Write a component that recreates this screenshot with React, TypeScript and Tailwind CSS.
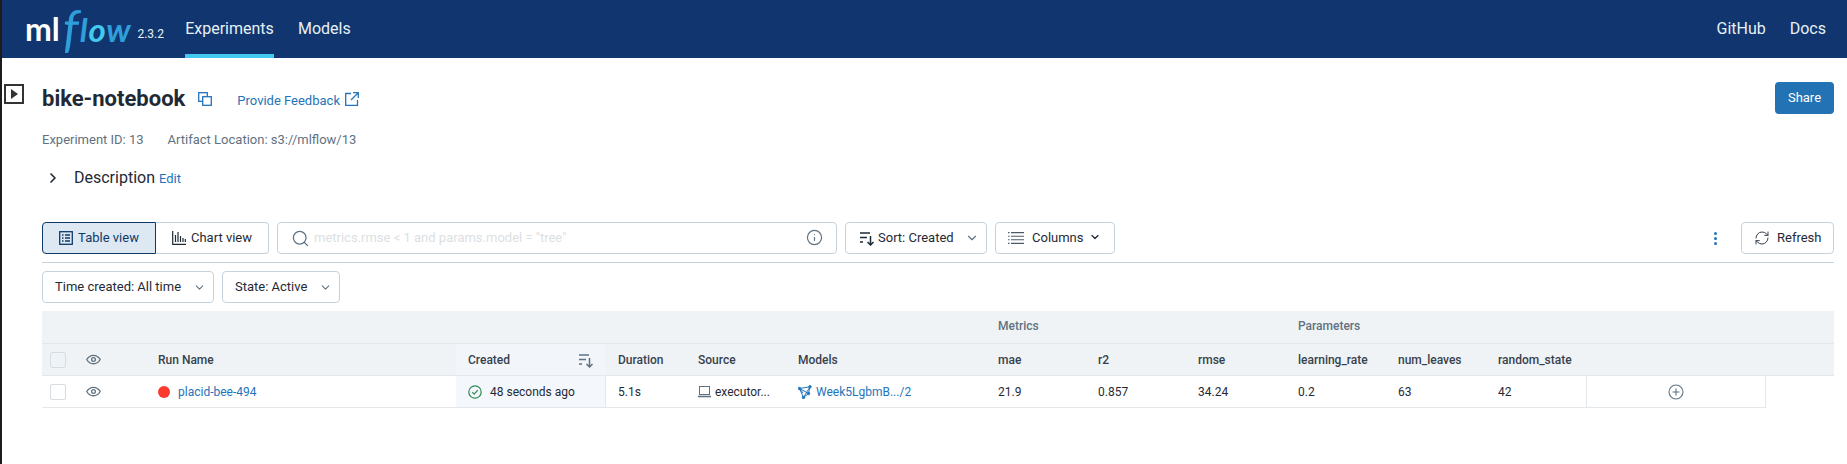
import { ChevronDown, ChevronRight, Info, RefreshCw, Search } from 'lucide-react';

const font = { fontFamily: 'Roboto, sans-serif' };

// small inline icons from the toolbar and the table
function SortIcon({ className }: { className?: string }) {
  return (
    <svg width="16" height="16" viewBox="0 0 16 16" fill="none" stroke="currentColor" strokeWidth="1.5" className={className}>
      <path d="M1 3h10M1 7.500h7M1 12h3" />
      <path d="M11.500 6v9M8.500 12l3 3 3-3" />
    </svg>
  );
}

function EyeIcon() {
  return (
    <svg width="15" height="15" viewBox="0 0 16 16" fill="none" stroke="#5f7281" strokeWidth="1.4">
      <path d="M.8 8C2.600 5 5 3.500 8 3.500S13.400 5 15.200 8C13.400 11 11 12.500 8 12.500S2.600 11 .8 8z" />
      <circle cx="8" cy="8" r="2" />
    </svg>
  );
}

function TableIcon() {
  return (
    <svg width="14" height="14" viewBox="0 0 14 14" fill="none" stroke="#0e3a68" strokeWidth="1.3">
      <rect x=".7" y=".7" width="12.600" height="12.600" />
      <path d="M3 4h1.500M3 7h1.500M3 10h1.500M6 4h5M6 7h5M6 10h5" />
    </svg>
  );
}

function ChartIcon() {
  return (
    <svg width="14" height="14" viewBox="0 0 14 14" fill="none" stroke="#1f2a36" strokeWidth="1.2">
      <path d="M.7 0v13.300H14M3.500 11V4M6 11V1M8.500 11V5M11 11V7M13.300 11V8" />
    </svg>
  );
}

function ColumnsIcon() {
  return (
    <svg width="16" height="12" viewBox="0 0 16 12" fill="none" stroke="#4b5b69" strokeWidth="1.1">
      <path d="M0 .6h1.500M0 4.200h1.500M0 7.800h1.500M0 11.400h1.500M3 .6h13M3 4.200h13M3 7.800h13M3 11.400h13" />
    </svg>
  );
}

function ModelIcon() {
  return (
    <svg width="14" height="14" viewBox="0 0 14 14" fill="none" stroke="#2374bb" strokeWidth="1">
      <path d="M1.500 3.500L12 1.800l-1.500 6.700-5 4zM1.500 3.500l9 5M12 1.800L5.500 12.500M1.500 3.500L5 8" />
      <circle cx="1.500" cy="3.500" r="1.200" fill="#2374bb" />
      <circle cx="12" cy="1.800" r="1.200" fill="#2374bb" />
      <circle cx="10.500" cy="8.500" r="1.200" fill="#2374bb" />
      <circle cx="5.500" cy="12.500" r="1.200" fill="#2374bb" />
    </svg>
  );
}

const toolbarBtn = 'h-[32px] flex items-center border border-[#c4d2de] rounded-[4px] bg-white text-[13px] text-[#1f2a36]';
const logoFont = { fontFamily: 'Lato, sans-serif' };

export default function App() {
  return (
    <div className="flex h-[464px] w-[1847px] overflow-hidden bg-white" style={font}>
      <div className="w-[2px] bg-[#1c1c1c] shrink-0" />
      <div className="flex-1 min-w-0 flex flex-col">
        {/* Top nav */}
        <header className="h-[58px] bg-[#11356f] flex items-stretch justify-between shrink-0">
          <div className="flex items-stretch">
            <div className="w-[183px] flex items-center pl-[23px] relative">
              <span className="text-white text-[32px] font-bold leading-[40px]" style={logoFont}>ml</span>
              <span className="text-[#2f9fdb] text-[50px] italic leading-[50px] -mt-[4px] pl-[3px] pr-[1px]" style={logoFont}>f</span>
              <span className="text-[#2f9fdb] text-[33px] font-bold italic leading-[40px] tracking-[0.8px]" style={logoFont}>
                l<span className="text-[#43c9ed]">o</span>w
              </span>
              <span className="text-[#e6f1f5] text-[12px] ml-[6px] mt-[9px]">2.3.2</span>
            </div>
            <div className="w-[89px] flex items-center justify-center text-[16px] text-[#e6f1f5] border-b-[4px] border-[#43c9ed] pt-[4px]">Experiments</div>
            <div className="ml-[24px] flex items-center text-[16px] text-[#e6f1f5]">Models</div>
          </div>
          <div className="flex items-center gap-[24px] pr-[21px] text-[16px] text-[#e6f1f5]">
            <span>GitHub</span>
            <span>Docs</span>
          </div>
        </header>

        <main className="relative pl-[40px] pr-[13px]">
          {/* Sidebar toggle */}
          <div className="absolute left-[2px] top-[26px] w-[20px] h-[20px] border-[2px] border-[#333333] flex items-center justify-center">
            <span className="w-0 h-0 border-y-[5px] border-y-transparent border-l-[7px] border-l-[#333333]" />
          </div>

          <div className="h-[32px] mt-[24px] flex items-center justify-between">
            <div className="flex items-center">
              <h1 className="text-[22px] font-bold text-[#1f2a36]">bike-notebook</h1>
              <svg width="14" height="14" viewBox="0 0 14 14" fill="none" stroke="#2374bb" strokeWidth="1.300" className="ml-[13px] mt-[2px]">
                <rect x=".7" y=".7" width="8.600" height="8.600" />
                <rect x="4.700" y="4.700" width="8.600" height="8.600" fill="white" />
              </svg>
              <span className="ml-[25px] text-[13px] text-[#2374bb] mt-[5px]">Provide Feedback</span>
              <svg width="14" height="14" viewBox="0 0 14 14" fill="none" stroke="#2374bb" strokeWidth="1.300" className="ml-[5px] mt-[2px]">
                <path d="M6 1.500H.7v11.800h11.800V8M8 .7h5.300V6M13 1L6 8" />
              </svg>
            </div>
            <button className="w-[59px] h-[32px] rounded-[4px] bg-[#2272b4] text-white text-[13px]">Share</button>
          </div>

          <div className="mt-[17px] h-[18px] flex items-center gap-[24px] text-[13px] text-[#5f7281]">
            <span>Experiment ID: 13</span>
            <span>Artifact Location: s3://mlflow/13</span>
          </div>

          <div className="mt-[19px] h-[20px] flex items-center">
            <ChevronRight size={16} strokeWidth={2.500} className="text-[#1f2a36] ml-[3px]" />
            <span className="ml-[13px] text-[16px] text-[#1f2a36]">Description</span>
            <span className="ml-[4px] text-[13px] text-[#2374bb] mt-[1px]">Edit</span>
          </div>

          {/* Toolbar */}
          <div className="mt-[34px] flex items-center pb-[8px] border-b border-[#c4d2de] h-[41px]">
            <div className="flex">
              <div className="w-[114px] h-[32px] flex items-center justify-center gap-[5px] border border-[#0e3a68] rounded-l-[4px] bg-[#dee8f2] text-[13px] text-[#0e3a68]">
                <TableIcon />
                <span>Table view</span>
              </div>
              <div className="w-[113px] h-[32px] flex items-center justify-center gap-[5px] border border-l-0 border-[#c4d2de] rounded-r-[4px] text-[13px] text-[#1f2a36]">
                <ChartIcon />
                <span>Chart view</span>
              </div>
            </div>
            <div className={`${toolbarBtn} w-[560px] ml-[8px] pl-[13px] pr-[13px]`}>
              <Search size={19} strokeWidth={1.600} className="text-[#5f7281]" />
              <span className="ml-[4px] text-[#dcdfe2] flex-1">metrics.rmse &lt; 1 and params.model = "tree"</span>
              <Info size={17} strokeWidth={1.700} className="text-[#5f7281] -mt-[2px]" />
            </div>
            <div className={`${toolbarBtn} w-[142px] ml-[8px] pl-[13px]`}>
              <SortIcon className="text-[#1f2a36]" />
              <span className="ml-[3px]">Sort: Created</span>
              <ChevronDown size={14} className="ml-[11px] text-[#5f7281]" />
            </div>
            <div className={`${toolbarBtn} w-[120px] ml-[8px] pl-[12px]`}>
              <ColumnsIcon />
              <span className="ml-[8px]">Columns</span>
              <ChevronDown size={12} strokeWidth={2.500} className="ml-[5px] text-[#1f2a36] -mt-[3px]" />
            </div>
            <div className="flex-1" />
            <div className="flex flex-col gap-[2px] mr-[24px]">
              <span className="w-[3px] h-[3px] rounded-full bg-[#2374bb]" />
              <span className="w-[3px] h-[3px] rounded-full bg-[#2374bb]" />
              <span className="w-[3px] h-[3px] rounded-full bg-[#2374bb]" />
            </div>
            <div className={`${toolbarBtn} w-[93px] pl-[12px]`}>
              <RefreshCw size={16} strokeWidth={1.500} className="text-[#37424d]" />
              <span className="ml-[7px]">Refresh</span>
            </div>
          </div>

          {/* Filters */}
          <div className="mt-[8px] flex gap-[8px]">
            <div className={`${toolbarBtn} w-[172px] pl-[12px]`}>
              <span>Time created: All time</span>
              <ChevronDown size={13} className="ml-[12px] text-[#5f7281]" />
            </div>
            <div className={`${toolbarBtn} w-[118px] pl-[12px]`}>
              <span>State: Active</span>
              <ChevronDown size={13} className="ml-[12px] text-[#5f7281]" />
            </div>
          </div>

          {/* Table */}
          <div className="mt-[8px] text-[12px]">
            <div className="h-[33px] pb-[2px] bg-[#f0f3f6] border-b border-[#e3e8ed] flex items-center font-medium text-[#5f7281]">
              <span className="ml-[956px] w-[300px]">Metrics</span>
              <span>Parameters</span>
            </div>
            <div className="h-[32px] bg-[#f0f3f6] border-b border-[#e3e8ed] flex items-stretch font-medium text-[#37424d]">
              <div className="w-[44px] flex items-center pl-[8px]">
                <span className="w-[16px] h-[16px] border border-[#d5dde4] rounded-[2px]" />
              </div>
              <div className="w-[72px] flex items-center"><EyeIcon /></div>
              <div className="w-[298px] flex items-center">Run Name</div>
              <div className="w-[150px] bg-[#f2f6fb] flex items-center justify-between pl-[12px] pr-[12px]">
                <span>Created</span>
                <SortIcon className="text-[#5f7281]" />
              </div>
              <div className="w-[92px] flex items-center pl-[12px]">Duration</div>
              <div className="w-[100px] flex items-center">Source</div>
              <div className="w-[200px] flex items-center">Models</div>
              <div className="w-[100px] flex items-center">mae</div>
              <div className="w-[100px] flex items-center">r2</div>
              <div className="w-[100px] flex items-center">rmse</div>
              <div className="w-[100px] flex items-center">learning_rate</div>
              <div className="w-[100px] flex items-center">num_leaves</div>
              <div className="flex items-center">random_state</div>
            </div>
            <div className="h-[32px] border-b border-[#e3e8ed] flex items-stretch text-[#1f2a36] w-[1724px]">
              <div className="w-[44px] flex items-center pl-[8px]">
                <span className="w-[16px] h-[16px] border border-[#d5dde4] rounded-[2px]" />
              </div>
              <div className="w-[72px] flex items-center"><EyeIcon /></div>
              <div className="w-[298px] flex items-center text-[#2374bb]">
                <span className="w-[12px] h-[12px] rounded-full bg-[#fb3b2e] mr-[8px]" />
                placid-bee-494
              </div>
              <div className="w-[150px] bg-[#f4f8fc] border-r border-[#e3e8ed] flex items-center pl-[12px]">
                <svg width="14" height="14" viewBox="0 0 14 14" fill="none" stroke="#2e8b57" strokeWidth="1.200">
                  <circle cx="7" cy="7" r="6.200" />
                  <path d="M4.200 7.200l2 2 3.600-4" />
                </svg>
                <span className="ml-[8px]">48 seconds ago</span>
              </div>
              <div className="w-[92px] flex items-center pl-[12px]">5.1s</div>
              <div className="w-[100px] flex items-center">
                <svg width="13" height="12" viewBox="0 0 13 12" fill="none" stroke="#5f7281" strokeWidth="1">
                  <rect x="1.500" y=".5" width="10" height="8" />
                  <path d="M0 10.500h13" strokeWidth="1.600" />
                </svg>
                <span className="ml-[4px]">executor...</span>
              </div>
              <div className="w-[200px] flex items-center text-[#2374bb]">
                <ModelIcon />
                <span className="ml-[4px]">Week5LgbmB.../2</span>
              </div>
              <div className="w-[100px] flex items-center">21.9</div>
              <div className="w-[100px] flex items-center">0.857</div>
              <div className="w-[100px] flex items-center">34.24</div>
              <div className="w-[100px] flex items-center">0.2</div>
              <div className="w-[100px] flex items-center">63</div>
              <div className="w-[88px] flex items-center">42</div>
              <div className="flex-1 border-l border-r border-[#e3e8ed] flex items-center justify-center">
                <svg width="16" height="16" viewBox="0 0 16 16" fill="none" stroke="#5f7281" strokeWidth="1.100">
                  <circle cx="8" cy="8" r="7" />
                  <path d="M8 4.500v7M4.500 8h7" />
                </svg>
              </div>
            </div>
          </div>
        </main>
      </div>
    </div>
  );
}
